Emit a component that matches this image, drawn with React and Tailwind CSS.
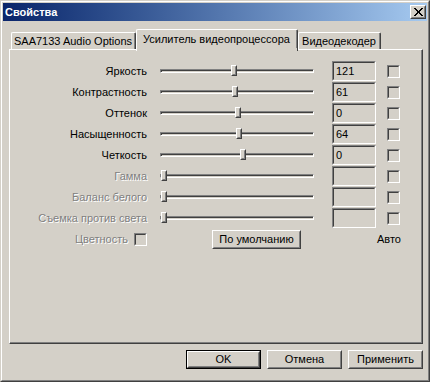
import React from 'react';

const FONT = { fontFamily: '"Liberation Sans", Arial, sans-serif' };

const rows = [
  { label: 'Яркость', value: '121', thumb: 71 },
  { label: 'Контрастность', value: '61', thumb: 72 },
  { label: 'Оттенок', value: '0', thumb: 75 },
  { label: 'Насыщенность', value: '64', thumb: 76 },
  { label: 'Четкость', value: '0', thumb: 80 },
  { label: 'Гамма', value: '', thumb: 1, disabled: true },
  { label: 'Баланс белого', value: '', thumb: 1, disabled: true },
  { label: 'Съемка против света', value: '', thumb: 1, disabled: true },
];

// raised 3D frame used by buttons and the trackbar thumb
function Raised({ className = '', children }) {
  return (
    <div className={`border border-t-white border-l-white border-r-[#404040] border-b-[#404040] ${className}`}>
      <div className="w-full h-full border border-t-[#d4d0c8] border-l-[#d4d0c8] border-r-[#808080] border-b-[#808080] flex items-center justify-center">
        {children}
      </div>
    </div>
  );
}

function Sunken({ className = '', children }) {
  return (
    <div className={`border border-t-[#808080] border-l-[#808080] border-r-white border-b-white ${className}`}>
      <div className="w-full h-full border border-t-[#404040] border-l-[#404040] border-r-[#d4d0c8] border-b-[#d4d0c8] flex items-center">
        {children}
      </div>
    </div>
  );
}

function Checkbox() {
  return <Sunken className="w-[13px] h-[13px] shrink-0 bg-[#d4d0c8]" />;
}

function Slider({ thumb }) {
  return (
    <div className="relative w-[154px] h-[20px] flex items-center">
      <div className="w-full h-[4px] border border-t-[#808080] border-l-[#808080] border-r-white border-b-white">
        <div className="w-full h-[2px] border-t border-l border-t-[#404040] border-l-[#404040]" />
      </div>
      <div className="absolute top-[4px]" style={{ left: thumb }}>
        <Raised className="w-[6px] h-[11px] bg-[#d4d0c8]" />
      </div>
    </div>
  );
}

function Label({ disabled, children }) {
  return disabled ? (
    <span className="text-[#808080] [text-shadow:1px_1px_0_#ffffff]">{children}</span>
  ) : (
    <span className="text-black">{children}</span>
  );
}

function Tab({ active, width, children }) {
  return (
    <div
      className={`${active ? 'relative z-10 h-[22px] -mb-[2px] pb-[3px]' : 'h-[17px]'} border-t border-l border-r border-t-white border-l-white border-r-[#404040] rounded-t-[2px] bg-[#d4d0c8] flex items-center justify-center`}
      style={{ width }}
    >
      <div className="w-full h-full border-r border-r-[#808080] flex items-center justify-center text-[11px] text-black whitespace-nowrap">
        {children}
      </div>
    </div>
  );
}

export default function App() {
  return (
    <div style={FONT} className="w-[430px] h-[382px] bg-[#d4d0c8] border border-t-[#d4d0c8] border-l-[#d4d0c8] border-r-[#404040] border-b-[#404040]">
      <div className="h-full border border-t-white border-l-white border-r-[#808080] border-b-[#808080] p-[1px] flex flex-col">
        {/* Title bar */}
        <div className="h-[18px] shrink-0 flex items-center justify-between pl-[2px] pr-[1px] bg-gradient-to-r from-[#0a246a] to-[#a6caf0]">
          <span className="text-white font-bold text-[11px]">Свойства</span>
          <Raised className="w-[16px] h-[14px] bg-[#d4d0c8]">
            <svg width="9" height="8" viewBox="0 0 9 8" shapeRendering="crispEdges">
              <path d="M0 0h2v1H0zM7 0h2v1H7zM1 1h2v1H1zM6 1h2v1H6zM2 2h2v1H2zM5 2h2v1H5zM3 3h3v1H3zM3 4h3v1H3zM2 5h2v1H2zM5 5h2v1H5zM1 6h2v1H1zM6 6h2v1H6zM0 7h2v1H0zM7 7h2v1H7z" fill="#000" />
            </svg>
          </Raised>
        </div>

        {/* Tabs */}
        <div className="h-[28px] shrink-0 flex items-end pl-[8px]">
          <Tab width={125}>SAA7133 Audio Options</Tab>
          <Tab width={162} active>Усилитель видеопроцессора</Tab>
          <Tab width={83}>Видеодекодер</Tab>
        </div>

        {/* Panel */}
        <div className="ml-[6px] w-[414px] h-[295px] shrink-0 border border-t-white border-l-white border-r-[#404040] border-b-[#404040]">
          <div className="h-full border-r border-b border-r-[#808080] border-b-[#808080] pt-[11px] flex flex-col gap-[1px] text-[11px]">
            {rows.map((r) => (
              <div key={r.label} className="h-[20px] flex items-center">
                <div className="w-[137px] text-right whitespace-nowrap">
                  <Label disabled={r.disabled}>{r.label}</Label>
                </div>
                <div className="ml-[13px]">
                  <Slider thumb={r.thumb} />
                </div>
                <Sunken className="ml-[18px] w-[44px] h-[20px] bg-[#d4d0c8]">
                  <span className="pl-[2px] text-black">{r.value}</span>
                </Sunken>
                <div className="ml-[11px]">
                  <Checkbox />
                </div>
              </div>
            ))}
            <div className="h-[20px] flex items-center">
              <div className="w-[137px] flex items-center justify-end gap-[6px]">
                <Label disabled>Цветность</Label>
                <Checkbox />
              </div>
              <Raised className="ml-[65px] w-[89px] h-[19px] bg-[#d4d0c8]">
                <span className="text-black">По умолчанию</span>
              </Raised>
              <span className="ml-[76px] text-black">Авто</span>
            </div>
          </div>
        </div>

        {/* Dialog buttons */}
        <div className="mt-[6px] pr-[4px] flex justify-end gap-[6px] text-[11px]">
          <div className="border border-black">
            <Raised className="w-[73px] h-[17px] bg-[#d4d0c8]">
              <span className="text-black">OK</span>
            </Raised>
          </div>
          <Raised className="w-[75px] h-[19px] bg-[#d4d0c8]">
            <span className="text-black">Отмена</span>
          </Raised>
          <Raised className="w-[75px] h-[19px] bg-[#d4d0c8]">
            <span className="text-black">Применить</span>
          </Raised>
        </div>
      </div>
    </div>
  );
}
